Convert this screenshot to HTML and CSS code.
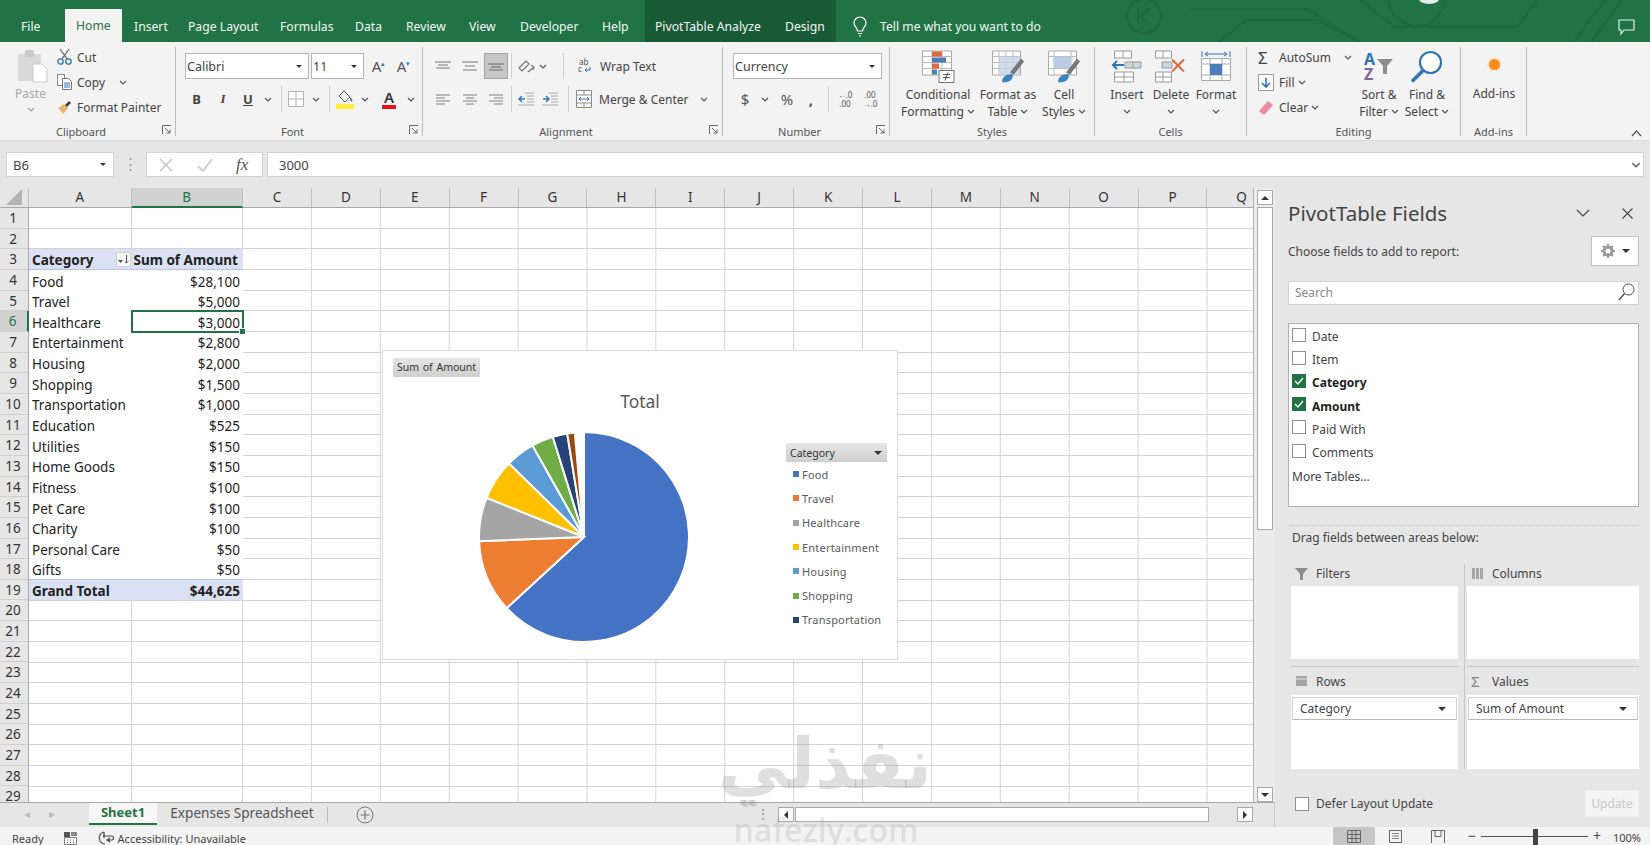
FILE: index.html
```html
<!DOCTYPE html>
<html lang="en">
<head>
    <meta charset="UTF-8">
    <title>Excel - PivotTable</title>
    <link rel="stylesheet" href="styles.css">
</head>
<body>
    <svg class="defs" width="0" height="0">
        <symbol id="chev" viewBox="0 0 8 5"><path d="M1 1l3 3 3-3" fill="none" stroke="#555" stroke-width="1.2"/></symbol>
        <symbol id="launch" viewBox="0 0 10 10"><path d="M.5 9V.5H9M3 3l5 5M8 4.5V8H4.5" fill="none" stroke="#666"/></symbol>
        <symbol id="caret" viewBox="0 0 8 4"><path d="M0 0h8L4 4z" fill="#333"/></symbol>
    </svg>

    <!-- Title bar with tabs -->
    <header class="titlebar">
        <svg class="circuit" width="560" height="42" viewBox="0 0 560 42">
            <g fill="none" stroke="#1d6a40" stroke-width="2">
                <circle cx="54" cy="16" r="17"/>
                <path d="M48 7v17M60 8l-10 8 10 9"/>
                <path d="M101 9h116l53 33M129 42l28-22h70l43 22M270 0l35 27h122l21-27M484 42l31-42M501 42l31-42"/>
                <circle cx="327" cy="-2" r="28"/>
            </g>
            <ellipse cx="339" cy="-1" rx="10" ry="5" fill="#e8ece9"/>
        </svg>
        <nav class="tabs">
            <a class="tab tab-file">File</a>
            <a class="tab tab-home">Home</a>
            <a class="tab tab-insert">Insert</a>
            <a class="tab tab-layout">Page Layout</a>
            <a class="tab tab-formulas">Formulas</a>
            <a class="tab tab-data">Data</a>
            <a class="tab tab-review">Review</a>
            <a class="tab tab-view">View</a>
            <a class="tab tab-dev">Developer</a>
            <a class="tab tab-help">Help</a>
            <div class="context-tabs">
                <a class="tab tab-pivot">PivotTable Analyze</a>
                <a class="tab">Design</a>
            </div>
            <svg class="bulb" width="14" height="20" viewBox="0 0 14 20"><path d="M4.5 14C4 10 1 9.500 1 6a6 6 0 0 1 12 0c0 3.500-3 4-3.500 8zM5 16.500h4M6 19h2" fill="none" stroke="#fff" stroke-width="1.200"/></svg>
            <span class="tell-me">Tell me what you want to do</span>
        </nav>
        <svg class="comment-icon" width="17" height="16" viewBox="0 0 17 16"><path d="M1 1h15v10H6l-3 4v-4H1z" fill="none" stroke="#e6f2ea" stroke-width="1.200"/></svg>
    </header>

    <!-- Ribbon -->
    <div class="ribbon">
        <section class="group g-clipboard">
            <div class="group-body">
                <div class="paste">
                    <svg width="30" height="32" viewBox="0 0 30 32">
                        <rect x="0" y="4" width="23" height="27" rx="1" fill="#dadada"/>
                        <rect x="7" y="0" width="9" height="7" rx="2" fill="#c9c9c9"/>
                        <path d="M15 14h9l5 5v13H15z" fill="#fff" stroke="#c8c8c8"/>
                    </svg>
                    <span class="paste-label">Paste</span>
                    <svg class="chev chev-pale"><use href="#chev"/></svg>
                </div>
                <div class="stack stack-clip">
                    <div class="stack-row">
                        <svg class="small-icon" width="15" height="16" viewBox="0 0 15 16"><path d="M3 0l7 10M12 0L5 10" stroke="#666" stroke-width="1.300" fill="none"/><circle cx="3.500" cy="12.500" r="2.700" fill="none" stroke="#2f75b5" stroke-width="1.300"/><circle cx="11.500" cy="12.500" r="2.700" fill="none" stroke="#2f75b5" stroke-width="1.300"/></svg>
                        <span>Cut</span>
                    </div>
                    <div class="stack-row">
                        <svg class="small-icon" width="15" height="16" viewBox="0 0 15 16"><path d="M.5.500h7v11h-7z" fill="#fff" stroke="#888"/><path d="M5.500 4.500h6l3 3v8h-9z" fill="#fff" stroke="#777"/><path d="M7 9h6M7 11h6M7 13h6" stroke="#2f75b5"/></svg>
                        <span>Copy</span>
                        <svg class="chev chev-copy"><use href="#chev"/></svg>
                    </div>
                    <div class="stack-row">
                        <svg class="small-icon" width="15" height="14" viewBox="0 0 15 14"><path d="M1 8l6-4 4 4-5 6c-1-2-3-4-5-6z" fill="#e9b66a"/><path d="M8 5l4-4 2 2-4 4z" fill="#444"/></svg>
                        <span>Format Painter</span>
                    </div>
                </div>
            </div>
            <div class="group-label"><span>Clipboard</span><svg class="launcher"><use href="#launch"/></svg></div>
        </section>

        <section class="group g-font">
            <div class="group-body col-body">
                <div class="row row-top">
                    <div class="combo combo-font"><span>Calibri</span><svg class="caret caret-sm"><use href="#caret"/></svg></div>
                    <div class="combo combo-size"><span>11</span><svg class="caret caret-sm"><use href="#caret"/></svg></div>
                    <span class="grow-a">A<sup>▴</sup></span>
                    <span class="grow-a">A<sup>▾</sup></span>
                </div>
                <div class="row row-bottom">
                    <span class="tb w23 fmt-b">B</span>
                    <span class="tb w30 fmt-i">I</span>
                    <span class="tb w20 fmt-u">U</span>
                    <span class="tb w20"><svg class="chev"><use href="#chev"/></svg></span>
                    <span class="sep sep-a"></span>
                    <span class="tb w28"><svg width="16" height="16" viewBox="0 0 16 16"><path d="M.5.500h15v15H.5zM8 .5v15M.5 8h15" fill="#fff" stroke="#b5b5b5"/></svg></span>
                    <span class="tb w12"><svg class="chev"><use href="#chev"/></svg></span>
                    <span class="sep sep-b"></span>
                    <span class="tb w30"><svg width="18" height="20" viewBox="0 0 18 20"><path d="M3 7l5-5 6 6-5 5z" fill="#fff" stroke="#555"/><path d="M14 8c2 2 3 3 2 5-2-1-2-3-2-5z" fill="#2f75b5"/><rect y="15" width="18" height="5" fill="#ffeb3b"/></svg></span>
                    <span class="tb w10"><svg class="chev"><use href="#chev"/></svg></span>
                    <span class="tb w34 color-a"><span class="color-letter">A</span></span>
                    <span class="tb w10"><svg class="chev"><use href="#chev"/></svg></span>
                </div>
            </div>
            <div class="group-label"><span>Font</span><svg class="launcher"><use href="#launch"/></svg></div>
        </section>

        <section class="group g-align">
            <div class="group-body col-body">
                <div class="row row-top">
                    <span class="tb w26"><svg width="16" height="10" viewBox="0 0 16 10"><path d="M0 1h16M3 4h10M1 7h14" stroke="#a0a0a0" stroke-width="1.500"/></svg></span>
                    <span class="tb w28"><svg width="16" height="12" viewBox="0 0 16 12"><path d="M0 2h16M3 6h10M1 10h14" stroke="#a0a0a0" stroke-width="1.500"/></svg></span>
                    <span class="tb w24 active-btn"><svg width="16" height="12" viewBox="0 0 16 12"><path d="M0 4h16M3 7h10M1 10h14" stroke="#8a8a8a" stroke-width="1.500"/></svg></span>
                    <span class="sep sep-c"></span>
                    <span class="tb w24"><svg width="17" height="15" viewBox="0 0 17 15"><path d="M1 9l7-7 3 3-7 7zM10 13l6-5M13 6l3 2-1 3" fill="none" stroke="#777" stroke-width="1.200"/></svg></span>
                    <span class="tb w10"><svg class="chev"><use href="#chev"/></svg></span>
                    <span class="sep sep-d"></span>
                    <span class="tb w30 wrap-icon"><svg width="14" height="14" viewBox="0 0 14 14"><text x="1" y="6" class="svg-ab">ab</text><text x="0" y="13" class="svg-ab">c</text><path d="M7 11h5V8M9 9l-2 2 2 2" fill="none" stroke="#2f75b5"/></svg></span>
                    <span class="ribbon-text">Wrap Text</span>
                </div>
                <div class="row row-bottom">
                    <span class="tb w26"><svg width="14" height="10" viewBox="0 0 14 10"><path d="M0 1h14M0 4h9M0 7h14M0 10h9" stroke="#a8a8a8" stroke-width="1.300"/></svg></span>
                    <span class="tb w28"><svg width="14" height="10" viewBox="0 0 14 10"><path d="M0 1h14M3 4h8M0 7h14M3 10h8" stroke="#a8a8a8" stroke-width="1.300"/></svg></span>
                    <span class="tb w24"><svg width="14" height="10" viewBox="0 0 14 10"><path d="M0 1h14M5 4h9M0 7h14M5 10h9" stroke="#a8a8a8" stroke-width="1.300"/></svg></span>
                    <span class="sep sep-c"></span>
                    <span class="tb w24"><svg width="16" height="14" viewBox="0 0 16 14"><path d="M7 1h9M9 4h7M9 7h7M9 10h7M0 13h16" stroke="#a8a8a8"/><path d="M7 7H1M4 4L1 7l3 3" fill="none" stroke="#2f75b5" stroke-width="1.400"/></svg></span>
                    <span class="tb w24"><svg width="16" height="14" viewBox="0 0 16 14"><path d="M7 1h9M9 4h7M9 7h7M9 10h7M0 13h16" stroke="#a8a8a8"/><path d="M1 7h6M4 4l3 3-3 3" fill="none" stroke="#2f75b5" stroke-width="1.400"/></svg></span>
                    <span class="sep sep-e"></span>
                    <span class="tb w30"><svg width="16" height="18" viewBox="0 0 16 18"><path d="M.5.500h15v17H.5zM.5 5h15M.5 13h15M8 .5V5M8 13v4.500" fill="#fff" stroke="#888"/><path d="M3 9h10M5 7L3 9l2 2M11 7l2 2-2 2" fill="none" stroke="#2f75b5"/></svg></span>
                    <span class="ribbon-text merge-text">Merge &amp; Center</span>
                    <svg class="chev"><use href="#chev"/></svg>
                </div>
            </div>
            <div class="group-label"><span>Alignment</span><svg class="launcher"><use href="#launch"/></svg></div>
        </section>

        <section class="group g-number">
            <div class="group-body col-body">
                <div class="row row-top">
                    <div class="combo combo-number"><span>Currency</span><svg class="caret caret-sm"><use href="#caret"/></svg></div>
                </div>
                <div class="row row-bottom">
                    <span class="tb w20 num-sym">$</span>
                    <span class="tb w20"><svg class="chev"><use href="#chev"/></svg></span>
                    <span class="tb w24 num-sym">%</span>
                    <span class="tb w24 num-sym num-comma">,</span>
                    <span class="sep sep-f"></span>
                    <span class="tb w26 dec-icon"><span class="dec-arrow">←</span>.0<br>.00</span>
                    <span class="tb w24 dec-icon">.00<br><span class="dec-arrow">→</span>.0</span>
                </div>
            </div>
            <div class="group-label"><span>Number</span><svg class="launcher"><use href="#launch"/></svg></div>
        </section>

        <section class="group g-styles">
            <div class="group-body big-row">
                <div class="big-btn w76">
                    <svg class="big-icon" width="32" height="32" viewBox="0 0 32 32">
                        <path d="M.5.500h29v24H.5z" fill="#fff" stroke="#aaa"/><path d="M10 .5v24M20 .5v24M.5 6h29M.5 12h29M.5 18h29" stroke="#bbb"/>
                        <rect x="10" y="1" width="10" height="5" fill="#e2673a"/><rect x="10" y="7" width="14" height="5" fill="#4a7ebb"/><rect x="10" y="13" width="7" height="5" fill="#e2673a"/><rect x="10" y="19" width="5" height="5" fill="#4a7ebb"/>
                        <rect x="17" y="20" width="15" height="12" fill="#fff" stroke="#777"/><path d="M21 24h7M21 27h7M26 22l-3 8" stroke="#555"/>
                    </svg>
                    <span>Conditional</span>
                    <span>Formatting <svg class="chev inline-chev"><use href="#chev"/></svg></span>
                </div>
                <div class="big-btn w64">
                    <svg class="big-icon" width="32" height="32" viewBox="0 0 32 32">
                        <path d="M.5.500h28v24H.5z" fill="#fff" stroke="#aaa"/><path d="M7 .5v24M14 .5v24M21 .5v24M.5 6h28M.5 12h28M.5 18h28" stroke="#bbb"/>
                        <rect x="7" y="6" width="21" height="18" fill="#c4d3e6" opacity=".8"/>
                        <path d="M18 22L29 8l3 3-10 13z" fill="#777"/><path d="M10 32c0-6 5-9 11-8 0 5-3 8-11 8z" fill="#3b82c4"/>
                    </svg>
                    <span>Format as</span>
                    <span>Table <svg class="chev inline-chev"><use href="#chev"/></svg></span>
                </div>
                <div class="big-btn w46">
                    <svg class="big-icon" width="32" height="32" viewBox="0 0 32 32">
                        <path d="M.5.500h28v24H.5z" fill="#fff" stroke="#aaa"/><path d="M.5 6h28M.5 18h28M6 .5v24M23 .5v24" stroke="#bbb"/>
                        <rect x="6" y="6" width="17" height="12" fill="#b8cbe3"/>
                        <path d="M18 22L29 8l3 3-10 13z" fill="#777"/><path d="M10 32c0-6 5-9 11-8 0 5-3 8-11 8z" fill="#3b82c4"/>
                    </svg>
                    <span>Cell</span>
                    <span>Styles <svg class="chev inline-chev"><use href="#chev"/></svg></span>
                </div>
            </div>
            <div class="group-label"><span>Styles</span></div>
        </section>

        <section class="group g-cells">
            <div class="group-body big-row">
                <div class="big-btn w44">
                    <svg class="big-icon" width="30" height="32" viewBox="0 0 30 32">
                        <path d="M2.500.5h17v7h-17zM11 .5v7M2.500 21.500h19v10h-19zM2.500 26.500h19M12 21.500v10" fill="#fff" stroke="#999"/>
                        <path d="M13 11.500h16v6H13zM21 11.500v6" fill="#ccd6e0" stroke="#999"/>
                        <path d="M12 14.500H1M5 10.500l-4 4 4 4" fill="none" stroke="#2f75b5" stroke-width="2"/>
                    </svg>
                    <span>Insert</span>
                    <svg class="chev"><use href="#chev"/></svg>
                </div>
                <div class="big-btn w44">
                    <svg class="big-icon" width="32" height="32" viewBox="0 0 32 32">
                        <path d="M.5.500h16v7H.5zM8 .5v7M.5 21.500h16v10H.5zM.5 26.500h16M8 21.500v10" fill="#fff" stroke="#999"/>
                        <path d="M7 11.500h10v6H7z" fill="#ccd6e0" stroke="#999"/>
                        <path d="M17 9l12 12M29 9L17 21" stroke="#e2673a" stroke-width="2"/>
                    </svg>
                    <span>Delete</span>
                    <svg class="chev"><use href="#chev"/></svg>
                </div>
                <div class="big-btn w46">
                    <svg class="big-icon" width="30" height="33" viewBox="0 0 30 33">
                        <path d="M1 1v6M29 1v6M4 4h22M4 4l3-2M4 4l3 2M26 4l-3-2M26 4l-3 2" stroke="#2f75b5" fill="none"/>
                        <path d="M.5 8.500h29v22H.5zM9 8.500v22M21 8.500v22M.5 14h29M.5 25h29" fill="#fff" stroke="#aaa"/>
                        <rect x="9" y="14" width="12" height="11" fill="#4a7ebb"/>
                    </svg>
                    <span>Format</span>
                    <svg class="chev"><use href="#chev"/></svg>
                </div>
            </div>
            <div class="group-label"><span>Cells</span></div>
        </section>

        <section class="group g-editing">
            <div class="group-body editing-body">
                <div class="stack stack-edit">
                    <div class="stack-row"><span class="sigma">Σ</span><span class="autosum">AutoSum</span><svg class="chev"><use href="#chev"/></svg></div>
                    <div class="stack-row">
                        <svg class="edit-icon" width="16" height="17" viewBox="0 0 16 17"><path d="M.5.500h15v16H.5z" fill="#fff" stroke="#999"/><path d="M8 4v9M4 9l4 4 4-4" fill="none" stroke="#2f75b5" stroke-width="1.600"/></svg>
                        <span>Fill</span><svg class="chev"><use href="#chev"/></svg>
                    </div>
                    <div class="stack-row">
                        <svg class="edit-icon" width="16" height="15" viewBox="0 0 16 15"><path d="M10 1l5 4-8 9-2 .5L1 11z" fill="#ed8ba3"/></svg>
                        <span>Clear</span><svg class="chev"><use href="#chev"/></svg>
                    </div>
                </div>
                <div class="big-btn w48 sort-btn">
                    <svg class="big-icon" width="32" height="31" viewBox="0 0 32 31"><text x="1" y="14" class="svg-az-a">A</text><text x="1" y="29" class="svg-az-z">Z</text><path d="M14 8h16l-6 7v8h-4v-8z" fill="#8c8c8c"/></svg>
                    <span>Sort &amp;</span>
                    <span>Filter <svg class="chev inline-chev"><use href="#chev"/></svg></span>
                </div>
                <div class="big-btn w48">
                    <svg class="big-icon" width="32" height="32" viewBox="0 0 32 32"><circle cx="19.500" cy="12" r="10.500" fill="#fff" stroke="#2f75b5" stroke-width="2.200"/><path d="M12 20L2 30" stroke="#2f75b5" stroke-width="3.500" stroke-linecap="round"/></svg>
                    <span>Find &amp;</span>
                    <span>Select <svg class="chev inline-chev"><use href="#chev"/></svg></span>
                </div>
            </div>
            <div class="group-label"><span>Editing</span></div>
        </section>

        <section class="group g-addins">
            <div class="group-body big-row">
                <div class="big-btn w66">
                    <div class="addin-dot"></div>
                    <span>Add-ins</span>
                </div>
            </div>
            <div class="group-label"><span>Add-ins</span></div>
        </section>

        <svg class="collapse" width="11" height="7" viewBox="0 0 11 7"><path d="M1 6l4.500-5L10 6" fill="none" stroke="#555" stroke-width="1.200"/></svg>
    </div>

    <!-- Formula bar -->
    <div class="formula-bar">
        <div class="name-box"><span>B6</span><svg class="caret caret-sm"><use href="#caret"/></svg></div>
        <div class="fx-dots">⋮</div>
        <div class="fx-buttons">
            <svg width="14" height="14" viewBox="0 0 14 14"><path d="M1 1l12 12M13 1L1 13" stroke="#c6c6c6" stroke-width="1.500"/></svg>
            <svg width="16" height="14" viewBox="0 0 16 14"><path d="M1 8l5 5L15 1" fill="none" stroke="#c6c6c6" stroke-width="1.500"/></svg>
            <span class="fx">fx</span>
        </div>
        <div class="formula-input"><span>3000</span><svg class="chev formula-chev"><use href="#chev"/></svg></div>
    </div>

    <div class="workspace">
        <div class="workbook">
            <div class="sheet-wrap">
                <div class="grid-area">
                    <div class="col-heads">
                        <div class="corner"><svg width="16" height="16" viewBox="0 0 16 16"><path d="M16 0v16H0z" fill="#b4b4b4"/></svg></div>
                        <div class="col-head col-a">A</div>
                        <div class="col-head col-b col-active">B</div>
                        <div class="col-head">C</div>
                        <div class="col-head">D</div>
                        <div class="col-head">E</div>
                        <div class="col-head">F</div>
                        <div class="col-head">G</div>
                        <div class="col-head">H</div>
                        <div class="col-head">I</div>
                        <div class="col-head">J</div>
                        <div class="col-head">K</div>
                        <div class="col-head">L</div>
                        <div class="col-head">M</div>
                        <div class="col-head">N</div>
                        <div class="col-head">O</div>
                        <div class="col-head">P</div>
                        <div class="col-head">Q</div>
                    </div>
                    <div class="sheet-body">
                        <div class="row-heads">
                            <div>1</div><div>2</div><div>3</div><div>4</div><div>5</div>
                            <div class="row-active">6</div><div>7</div><div>8</div><div>9</div><div>10</div>
                            <div>11</div><div>12</div><div>13</div><div>14</div><div>15</div>
                            <div>16</div><div>17</div><div>18</div><div>19</div><div>20</div>
                            <div>21</div><div>22</div><div>23</div><div>24</div><div>25</div>
                            <div>26</div><div>27</div><div>28</div><div>29</div>
                        </div>
                        <div class="cells">
                            <div class="cols-ab">
                                <table class="pivot">
                                    <tr class="pivot-head"><td>Category<span class="filter-btn"><svg width="11" height="9" viewBox="0 0 11 9"><path d="M0 5h5L2.500 8z" fill="#555"/><path d="M8.500 0v8M7 6.500l1.500 1.500L10 6.500" fill="none" stroke="#555"/></svg></span></td><td class="head-b">Sum of Amount</td></tr>
                                    <tr><td>Food</td><td class="amt">$28,100</td></tr>
                                    <tr><td>Travel</td><td class="amt">$5,000</td></tr>
                                    <tr><td>Healthcare</td><td class="amt cell-selected">$3,000</td></tr>
                                    <tr><td>Entertainment</td><td class="amt">$2,800</td></tr>
                                    <tr><td>Housing</td><td class="amt">$2,000</td></tr>
                                    <tr><td>Shopping</td><td class="amt">$1,500</td></tr>
                                    <tr><td>Transportation</td><td class="amt">$1,000</td></tr>
                                    <tr><td>Education</td><td class="amt">$525</td></tr>
                                    <tr><td>Utilities</td><td class="amt">$150</td></tr>
                                    <tr><td>Home Goods</td><td class="amt">$150</td></tr>
                                    <tr><td>Fitness</td><td class="amt">$100</td></tr>
                                    <tr><td>Pet Care</td><td class="amt">$100</td></tr>
                                    <tr><td>Charity</td><td class="amt">$100</td></tr>
                                    <tr><td>Personal Care</td><td class="amt">$50</td></tr>
                                    <tr><td>Gifts</td><td class="amt">$50</td></tr>
                                    <tr class="pivot-total"><td>Grand Total</td><td class="amt">$44,625</td></tr>
                                </table>
                            </div>
                            <div class="cols-rest"></div>

                            <!-- Chart floats over the cells -->
                            <div class="chart">
                                <div class="chart-field">Sum of Amount</div>
                                <div class="chart-title">Total</div>
                                <svg class="pie" width="214" height="214" viewBox="-107 -107 214 214">
                                    <g stroke="#fff" stroke-width="2">
                                        <path d="M0 0L0-105A105 105 0 1 1-77.300 71.100Z" fill="#4472c4"/>
                                        <path d="M0 0L-77.300 71.100A105 105 0 0 1-104.900 4.200Z" fill="#ed7d31"/>
                                        <path d="M0 0L-104.900 4.200A105 105 0 0 1-97.400-39.200Z" fill="#a5a5a5"/>
                                        <path d="M0 0L-97.400-39.200A105 105 0 0 1-74.900-73.600Z" fill="#ffc000"/>
                                        <path d="M0 0L-74.900-73.600A105 105 0 0 1-51.500-91.500Z" fill="#5b9bd5"/>
                                        <path d="M0 0L-51.500-91.500A105 105 0 0 1-31.200-100.300Z" fill="#70ad47"/>
                                        <path d="M0 0L-31.200-100.300A105 105 0 0 1-16.800-103.600Z" fill="#264478"/>
                                        <path d="M0 0L-16.800-103.600A105 105 0 0 1-9.200-104.600Z" fill="#9e480e"/>
                                    </g>
                                </svg>
                                <div class="legend">
                                    <div class="legend-field"><span>Category</span><svg class="caret"><use href="#caret"/></svg></div>
                                    <div class="legend-item"><i class="swatch s-food"></i>Food</div>
                                    <div class="legend-item"><i class="swatch s-travel"></i>Travel</div>
                                    <div class="legend-item"><i class="swatch s-health"></i>Healthcare</div>
                                    <div class="legend-item"><i class="swatch s-ent"></i>Entertainment</div>
                                    <div class="legend-item"><i class="swatch s-housing"></i>Housing</div>
                                    <div class="legend-item"><i class="swatch s-shop"></i>Shopping</div>
                                    <div class="legend-item"><i class="swatch s-trans"></i>Transportation</div>
                                </div>
                            </div>
                        </div>
                    </div>
                </div>
                <div class="vscroll">
                    <div class="sb-btn"><svg class="caret caret-up"><use href="#caret"/></svg></div>
                    <div class="v-thumb"></div>
                    <div class="v-track"></div>
                    <div class="sb-btn"><svg class="caret"><use href="#caret"/></svg></div>
                </div>
            </div>
            <div class="tabbar">
                <span class="tab-nav">◂</span>
                <span class="tab-nav">▸</span>
                <div class="sheet-tab">Sheet1</div>
                <div class="sheet-tab2">Expenses Spreadsheet</div>
                <span class="tab-sep"></span>
                <span class="add-sheet"><svg width="18" height="18" viewBox="0 0 18 18"><circle cx="9" cy="9" r="8" fill="none" stroke="#777"/><path d="M9 4.500v9M4.500 9h9" stroke="#777" stroke-width="1.200"/></svg></span>
                <span class="hdots">⋮</span>
                <div class="hscroll">
                    <div class="sb-btn sb-h"><svg class="caret caret-left"><use href="#caret"/></svg></div>
                    <div class="h-thumb"></div>
                    <div class="h-track"></div>
                    <div class="sb-btn sb-h"><svg class="caret caret-right"><use href="#caret"/></svg></div>
                </div>
            </div>
        </div>

        <!-- PivotTable Fields pane -->
        <aside class="pane">
            <div class="pane-head">
                <h2>PivotTable Fields</h2>
                <svg class="pane-chev" width="14" height="8" viewBox="0 0 14 8"><path d="M1 1l6 6 6-6" fill="none" stroke="#444" stroke-width="1.100"/></svg>
                <svg class="pane-close" width="11" height="11" viewBox="0 0 11 11"><path d="M.5.500l10 10M10.500.5l-10 10" stroke="#444" stroke-width="1.100"/></svg>
            </div>
            <div class="pane-choose">
                <span>Choose fields to add to report:</span>
                <div class="gear-btn">
                    <svg width="14" height="14" viewBox="0 0 14 14"><circle cx="7" cy="7" r="4" fill="none" stroke="#999" stroke-width="3"/><path d="M7 0v3M7 11v3M0 7h3M11 7h3M2 2l2 2M10 10l2 2M12 2l-2 2M4 10l-2 2" stroke="#999" stroke-width="2"/></svg>
                    <svg class="caret"><use href="#caret"/></svg>
                </div>
            </div>
            <div class="pane-search">
                <span>Search</span>
                <svg width="17" height="18" viewBox="0 0 17 18"><circle cx="10.500" cy="6.500" r="5.500" fill="none" stroke="#444"/><path d="M6.500 10.500L1 17" stroke="#444" stroke-width="1.200"/></svg>
            </div>
            <div class="field-list">
                <label class="field"><i class="check"></i>Date</label>
                <label class="field"><i class="check"></i>Item</label>
                <label class="field field-on"><i class="check check-on"><svg width="10" height="8" viewBox="0 0 10 8"><path d="M1 4l3 3 5-6" fill="none" stroke="#fff" stroke-width="1.300"/></svg></i>Category</label>
                <label class="field field-on"><i class="check check-on"><svg width="10" height="8" viewBox="0 0 10 8"><path d="M1 4l3 3 5-6" fill="none" stroke="#fff" stroke-width="1.300"/></svg></i>Amount</label>
                <label class="field"><i class="check"></i>Paid With</label>
                <label class="field"><i class="check"></i>Comments</label>
                <div class="more-tables">More Tables...</div>
            </div>
            <div class="pane-dots"></div>
            <div class="drag-hint">Drag fields between areas below:</div>
            <div class="areas">
                <div class="area">
                    <div class="area-head">
                        <svg width="13" height="12" viewBox="0 0 13 12"><path d="M0 0h13L8 6v6H5V6z" fill="#8c8c8c"/></svg>
                        <span>Filters</span>
                    </div>
                    <div class="area-box area-top"></div>
                </div>
                <div class="area">
                    <div class="area-head">
                        <svg width="13" height="12" viewBox="0 0 13 12"><path d="M1 0h3v11H1zM5 0h3v11H5zM9 0h3v11H9z" fill="#a5a5a5"/></svg>
                        <span>Columns</span>
                    </div>
                    <div class="area-box area-top"></div>
                </div>
                <div class="area area-lower">
                    <div class="area-head">
                        <svg width="13" height="12" viewBox="0 0 13 12"><path d="M1 1h11v2.500H1zM1 4.500h11V11H1z" fill="#a5a5a5"/></svg>
                        <span>Rows</span>
                    </div>
                    <div class="area-box area-bottom">
                        <div class="area-item"><span>Category</span><svg class="caret"><use href="#caret"/></svg></div>
                    </div>
                </div>
                <div class="area area-lower">
                    <div class="area-head">
                        <span class="sum-icon">Σ</span>
                        <span>Values</span>
                    </div>
                    <div class="area-box area-bottom">
                        <div class="area-item"><span>Sum of Amount</span><svg class="caret"><use href="#caret"/></svg></div>
                    </div>
                </div>
            </div>
            <div class="pane-foot">
                <label class="defer"><i class="check check-defer"></i>Defer Layout Update</label>
                <div class="update-btn">Update</div>
            </div>
        </aside>
    </div>

    <!-- Status bar -->
    <footer class="statusbar">
        <span class="ready">Ready</span>
        <svg class="calc-icon" width="13" height="13" viewBox="0 0 13 13"><rect width="6" height="5" fill="#555"/><path d="M.5 5.500h12v7H.5z" fill="#fff" stroke="#777"/><path d="M3 8h1M6 8h1M9 8h1M3 10.500h1M6 10.500h1M9 10.500h1" stroke="#555"/><rect x="7" width="6" height="4" fill="#888"/></svg>
        <svg class="a11y-icon" width="17" height="14" viewBox="0 0 17 14"><path d="M6 1C2 2 0 6 2 10c1 2 3 3 5 3" fill="none" stroke="#555" stroke-width="1.200"/><path d="M5 5h9c2 0 2 4 0 4h-4M12 7l-3 2 3 2M6 1v6" fill="none" stroke="#444" stroke-width="1.200"/></svg>
        <span class="a11y-text">Accessibility: Unavailable</span>
        <div class="views">
            <span class="view view-on"><svg width="14" height="13" viewBox="0 0 14 13"><path d="M.5.500h13v12H.5zM5 .5v12M9 .5v12M.5 4.500h13M.5 8.500h13" fill="none" stroke="#666"/></svg></span>
            <span class="view"><svg width="13" height="13" viewBox="0 0 13 13"><path d="M.5.500h12v12H.5z" fill="none" stroke="#666"/><path d="M3 3.500h7M3 6h7M3 8.500h7" stroke="#888"/></svg></span>
            <span class="view"><svg width="14" height="13" viewBox="0 0 14 13"><path d="M.5 13V.5h13V13M4 .5v6h6V.5" fill="none" stroke="#666"/></svg></span>
        </div>
        <div class="zoom-ctl">
            <span class="zoom-sign">−</span>
            <div class="slider"><i></i></div>
            <span class="zoom-sign">+</span>
            <span class="zoom-pct">100%</span>
        </div>
    </footer>

    <!-- Site watermark -->
    <div class="watermark-ar" dir="rtl" lang="ar">نفذلي</div>
    <div class="watermark-dots"></div>
    <div class="watermark-en">nafezly.com</div>
</body>
</html>
```

FILE: styles.css
```css
* {
    box-sizing: border-box;
}
html, body {
    margin: 0;
    padding: 0;
}
body {
    width: 1650px;
    height: 845px;
    overflow: hidden;
    position: relative;
    display: flex;
    flex-direction: column;
    font-family: "Noto Sans", "Open Sans", sans-serif;
    font-size: 12px;
    color: #444;
    background-color: #e6e6e6;
}
svg {
    overflow: visible;
}
.defs {
    position: absolute;
}
.chev {
    width: 8px;
    height: 5px;
    flex: none;
}
.chev-pale {
    opacity: .5;
}
.inline-chev {
    vertical-align: 2px;
}
.caret {
    width: 8px;
    height: 4px;
    flex: none;
}
.caret-sm {
    width: 6px;
    height: 3px;
}
.launcher {
    width: 10px;
    height: 10px;
    flex: none;
    margin-right: 3px;
}

/* Title bar */
.titlebar {
    height: 42px;
    flex: none;
    background-color: #217346;
    position: relative;
    overflow: hidden;
}
.circuit {
    position: absolute;
    left: 1090px;
    top: 0;
    overflow: hidden;
}
.comment-icon {
    position: absolute;
    left: 1618px;
    top: 19px;
}
.tabs {
    display: flex;
    height: 42px;
    color: #fff;
    font-size: 12.2px;
}
.tab {
    display: flex;
    align-items: center;
    height: 42px;
    padding-top: 10px;
    color: #f2f7f4;
    flex: none;
}
.tab-file { margin-left: 21px; width: 44px; }
.tab-home {
    width: 57px;
    margin-top: 9px;
    height: 33px;
    padding: 0 0 0 11px;
    background-color: #f3f3f3;
    color: #217346;
}
.tab-insert { margin-left: 12px; width: 54px; }
.tab-layout { width: 92px; }
.tab-formulas { width: 75px; }
.tab-data { width: 51px; }
.tab-review { width: 63px; }
.tab-view { width: 51px; }
.tab-dev { width: 82px; }
.tab-help { width: 43px; }
.context-tabs {
    display: flex;
    width: 191px;
    padding-left: 10px;
    background-color: #185a36;
}
.tab-pivot { width: 130px; }
.bulb {
    margin: 17px 0 0 17px;
    flex: none;
}
.tell-me {
    margin: 18px 0 0 13px;
    color: #f2f7f4;
}

/* Ribbon */
.ribbon {
    height: 98px;
    flex: none;
    display: flex;
    background-color: #f3f3f3;
    position: relative;
}
.group {
    height: 89px;
    margin-top: 5px;
    display: flex;
    flex-direction: column;
    border-right: 1px solid #bdbdbd;
    flex: none;
}
.g-clipboard { width: 176px; }
.g-font { width: 247px; }
.g-align { width: 300px; }
.g-number { width: 167px; }
.g-styles { width: 205px; }
.g-cells { width: 152px; }
.g-editing { width: 214px; }
.g-addins { width: 66px; }
.group-body {
    height: 78px;
    flex: none;
    display: flex;
}
.group-label {
    height: 11px;
    line-height: 14px;
    display: flex;
    font-size: 11px;
    color: #555;
}
.group-label span {
    flex: 1;
    text-align: center;
}
.collapse {
    position: absolute;
    left: 1631px;
    top: 88px;
}
.paste {
    width: 30px;
    margin: 3px 0 0 18px;
    display: flex;
    flex-direction: column;
    align-items: center;
    flex: none;
}
.paste-label {
    margin: 3px 5px 0 0;
    color: #a8a8a8;
}
.paste .chev {
    margin: 5px 5px 0 0;
}
.stack {
    display: flex;
    flex-direction: column;
    gap: 1px;
    margin-top: -2px;
}
.stack-clip {
    margin-left: 9px;
}
.stack-row {
    display: flex;
    align-items: center;
    height: 24px;
    gap: 5px;
}
.small-icon {
    flex: none;
}
.chev-copy {
    margin-left: 9px;
}
.col-body {
    flex-direction: column;
}
.row {
    display: flex;
    align-items: center;
}
.row-top {
    height: 26px;
    margin-top: 6px;
}
.row-bottom {
    height: 26px;
    margin-top: 7px;
}
.g-font .col-body {
    padding-left: 9px;
}
.combo {
    height: 26px;
    background-color: #fff;
    border: 1px solid #b5b5b5;
    display: flex;
    align-items: center;
    justify-content: space-between;
    padding: 0 6px 0 1px;
    font-size: 12.5px;
}
.combo-font { width: 124px; }
.combo-size { width: 53px; margin: 0 0 0 2px; }
.grow-a {
    width: 25px;
    text-align: center;
    font-size: 15px;
    color: #555;
}
.combo-size + .grow-a {
    margin-left: 2px;
}
.grow-a sup {
    font-size: 7px;
    color: #2f75b5;
    line-height: 0;
}
.tb {
    display: flex;
    align-items: center;
    justify-content: center;
    height: 26px;
    flex: none;
}
.w10 { width: 10px; }
.w12 { width: 12px; }
.w20 { width: 20px; }
.w23 { width: 23px; }
.w24 { width: 24px; }
.w26 { width: 26px; }
.w28 { width: 28px; }
.w30 { width: 30px; }
.w34 { width: 34px; }
.fmt-b {
    font-family: "Noto Sans", sans-serif;
    font-weight: 700;
    font-size: 13px;
}
.fmt-i {
    font-style: italic;
    font-weight: 700;
    font-size: 13px;
    font-family: "Liberation Serif", serif;
}
.fmt-u {
    font-weight: 700;
    font-size: 13px;
    text-decoration: underline;
}
.sep {
    width: 1px;
    height: 26px;
    background-color: #d0d0d0;
    flex: none;
}
.sep-a { margin: 0 0 0 3px; }
.sep-b { margin: 0 0 0 7px; }
.sep-c { margin: 0 2px 0 3px; }
.sep-d { margin: 0 0 0 15px; }
.sep-e { margin: 0 0 0 6px; }
.sep-f { margin: 0 3px 0 5px; }
.color-a {
    margin-left: 2px;
}
.color-letter {
    font-size: 15px;
    font-weight: 600;
    line-height: 16px;
    color: #333;
    border-bottom: 4px solid #e81123;
    padding: 0 2px;
}
.g-align .col-body {
    padding-left: 7px;
}
.active-btn {
    background-color: #c6c6c6;
    border: 1px solid #a5a5a5;
}
.wrap-icon {
    margin-left: 6px;
}
.ribbon-text {
    font-size: 12px;
}
.merge-text {
    margin-right: 11px;
}
.svg-ab {
    font-size: 8px;
    fill: #555;
}
.g-number .col-body {
    padding-left: 10px;
}
.g-number .row-bottom {
    padding-left: 2px;
}
.combo-number {
    width: 149px;
}
.num-sym {
    font-size: 15px;
    color: #555;
}
.num-comma {
    font-weight: 700;
}
.dec-icon {
    display: block;
    height: auto;
    font-size: 8px;
    line-height: 9px;
    text-align: center;
    color: #555;
}
.dec-arrow {
    color: #2f75b5;
}
.big-row {
    padding: 3px 0 0 10px;
}
.big-btn {
    display: flex;
    flex-direction: column;
    align-items: center;
    flex: none;
    line-height: 17px;
    text-align: center;
    white-space: nowrap;
}
.big-icon {
    height: 33px;
    margin-bottom: 3px;
    flex: none;
}
.big-btn > .chev {
    margin-top: 6px;
}
.w44 { width: 44px; }
.w46 { width: 46px; }
.w48 { width: 48px; }
.w64 { width: 64px; }
.w66 { width: 66px; }
.w76 { width: 76px; }
.g-styles .w46 { margin-left: 1px; }
.editing-body {
    padding: 3px 0 0 11px;
}
.stack-edit {
    width: 105px;
    flex: none;
}
.stack-edit .stack-row {
    gap: 3px;
}
.sigma {
    font-size: 17px;
    width: 18px;
    color: #444;
}
.autosum {
    width: 62px;
}
.edit-icon {
    margin-right: 2px;
    flex: none;
}
.sort-btn {
    margin-left: -8px;
}
.svg-az-a {
    font-size: 16px;
    font-weight: 700;
    fill: #2f75b5;
}
.svg-az-z {
    font-size: 16px;
    font-weight: 700;
    fill: #8064a2;
}
.editing-body .stack {
    margin-top: -5px;
}
.addin-dot {
    width: 11px;
    height: 11px;
    margin: 9px 0 15px;
    border-radius: 50%;
    background-color: #ff8c1a;
    box-shadow: 0 0 3px #ffc680;
}
.g-addins .big-row {
    padding-left: 0;
}

/* Formula bar */
.formula-bar {
    height: 48px;
    flex: none;
    display: flex;
    padding: 11px 6px 11px 6px;
    background-color: #e6e6e6;
    border-top: 1px solid #dcdcdc;
}
.name-box {
    width: 108px;
    background-color: #fff;
    border: 1px solid #d4d4d4;
    display: flex;
    align-items: center;
    justify-content: space-between;
    padding: 0 7px 0 6px;
    font-size: 13px;
}
.fx-dots {
    width: 32px;
    text-align: center;
    color: #999;
    line-height: 22px;
    font-size: 15px;
}
.fx-buttons {
    width: 117px;
    background-color: #fff;
    border: 1px solid #d4d4d4;
    display: flex;
    align-items: center;
    gap: 24px;
    padding-left: 12px;
}
.fx {
    font-family: "Liberation Serif", serif;
    font-style: italic;
    font-size: 17px;
    margin-left: -1px;
    color: #555;
}
.formula-input {
    flex: 1;
    margin-left: 4px;
    background-color: #fff;
    border: 1px solid #d4d4d4;
    display: flex;
    align-items: center;
    justify-content: space-between;
    padding: 0 2px 0 11px;
    font-size: 13px;
}
.formula-chev {
    width: 10px;
    height: 6px;
}

/* Sheet */
.workspace {
    height: 639px;
    flex: none;
    display: flex;
}
.workbook {
    width: 1275px;
    flex: none;
    display: flex;
    flex-direction: column;
    border-right: 1px solid #c8c8c8;
}
.sheet-wrap {
    height: 614px;
    flex: none;
    display: flex;
}
.grid-area {
    width: 1253px;
    flex: none;
    display: flex;
    flex-direction: column;
    overflow: hidden;
}
.col-heads {
    height: 20px;
    flex: none;
    display: flex;
    background-color: #e6e6e6;
    border-bottom: 1px solid #a8a8a8;
}
.corner {
    width: 29px;
    flex: none;
    display: flex;
    align-items: flex-end;
    justify-content: center;
    padding: 0 0 2px 0;
    border-right: 1px solid #c0c0c0;
}
.col-head {
    width: 68.9px;
    flex: none;
    text-align: center;
    line-height: 19px;
    font-size: 13.5px;
    border-right: 1px solid #c0c0c0;
    color: #333;
}
.col-a { width: 102.5px; }
.col-b { width: 111.5px; }
.col-active {
    background-color: #d2d2d2;
    color: #217346;
    border-bottom: 2px solid #217346;
    height: 20px;
}
.sheet-body {
    flex: 1;
    display: flex;
    min-height: 0;
    position: relative;
}
.row-heads {
    width: 29px;
    flex: none;
    border-right: 1px solid #a8a8a8;
    background-color: #e6e6e6;
}
.row-heads div {
    height: 20.67px;
    line-height: 21px;
    padding-right: 2px;
    text-align: center;
    font-size: 13.5px;
    color: #333;
    border-bottom: 1px solid #d0d0d0;
}
.row-heads .row-active {
    background-color: #d2d2d2;
    color: #217346;
    margin-right: -1px;
    border-right: 2px solid #217346;
}
.cells {
    flex: 1;
    display: flex;
    position: relative;
    background-color: #fff;
}
.cols-ab {
    width: 214px;
    flex: none;
    padding-top: 41.34px;
    background:
        linear-gradient(#d4d4d4, #d4d4d4) 102px 0 / 1px 100% no-repeat,
        linear-gradient(#d4d4d4, #d4d4d4) 213px 0 / 1px 100% no-repeat,
        repeating-linear-gradient(to bottom, transparent 0, transparent 19.67px, #d4d4d4 19.67px, #d4d4d4 20.67px);
}
.cols-rest {
    flex: 1;
    background:
        linear-gradient(to right, transparent 67.9px, #d4d4d4 67.9px) 0 0 / 68.9px 100%,
        repeating-linear-gradient(to bottom, transparent 0, transparent 19.67px, #d4d4d4 19.67px, #d4d4d4 20.67px);
}

/* Pivot table */
.pivot {
    width: 214px;
    border-collapse: collapse;
    table-layout: fixed;
    background-color: #fff;
    font-size: 13.5px;
    color: #222;
}
.pivot td {
    height: 20.67px;
    padding: 2px 3px 0;
    white-space: nowrap;
    position: relative;
}
.pivot td:first-child {
    width: 102.5px;
}
.pivot-head td {
    background-color: #d9e1f2;
    font-weight: 700;
    border-bottom: 1px solid #b4c6e7;
}
.pivot-head .head-b {
    text-align: left;
    padding-left: 2px;
}
.filter-btn {
    position: absolute;
    right: 1px;
    top: 3px;
    width: 15px;
    height: 15px;
    background-color: #f7f7f7;
    border: 1px solid #d0d0d0;
    display: flex;
    align-items: center;
    justify-content: center;
}
.amt {
    text-align: right;
}
.pivot-total td {
    background-color: #d9e1f2;
    font-weight: 700;
    border-top: 1px solid #b4c6e7;
}
.pivot .cell-selected {
    outline: 2px solid #217346;
    outline-offset: -1px;
}
.cell-selected::after {
    content: "";
    position: absolute;
    right: -3px;
    bottom: -3px;
    width: 5px;
    height: 5px;
    background-color: #217346;
    border: 1px solid #fff;
}

/* Chart */
.chart {
    position: absolute;
    left: 353px;
    top: 142px;
    width: 516px;
    height: 310px;
    background-color: #fff;
    border: 1px solid #dcdcdc;
}
.chart-field {
    position: absolute;
    left: 10px;
    top: 7px;
    width: 87px;
    height: 19px;
    background: linear-gradient(#e6e6e6, #cfcfcf);
    text-align: center;
    line-height: 18px;
    font-size: 10.5px;
    color: #333;
    word-spacing: 1px;
}
.chart-title {
    position: absolute;
    left: 0;
    right: 0;
    top: 37px;
    text-align: center;
    font-size: 17.5px;
    line-height: 26px;
    color: #595959;
}
.pie {
    position: absolute;
    left: 94px;
    top: 79px;
}
.legend {
    position: absolute;
    left: 403px;
    top: 92px;
    width: 101px;
}
.legend-field {
    height: 19px;
    background: linear-gradient(#e6e6e6, #cfcfcf);
    display: flex;
    align-items: center;
    justify-content: space-between;
    padding: 0 5px 0 4px;
    font-size: 10.5px;
    color: #333;
}
.legend-item {
    height: 24.3px;
    padding-left: 7px;
    display: flex;
    align-items: center;
    font-size: 11px;
    color: #595959;
    white-space: nowrap;
    letter-spacing: .2px;
}
.swatch {
    width: 6px;
    height: 6px;
    margin-right: 3px;
    flex: none;
}
.s-food { background-color: #4472c4; }
.s-travel { background-color: #ed7d31; }
.s-health { background-color: #a5a5a5; }
.s-ent { background-color: #ffc000; }
.s-housing { background-color: #5b9bd5; }
.s-shop { background-color: #70ad47; }
.s-trans { background-color: #264478; }

/* Scrollbars */
.vscroll {
    flex: 1;
    display: flex;
    flex-direction: column;
    align-items: center;
    padding: 2px 3px 0 3px;
    border-left: 1px solid #b0b0b0;
    background-color: #ececec;
}
.sb-btn {
    width: 16px;
    height: 15px;
    flex: none;
    display: flex;
    align-items: center;
    justify-content: center;
    background-color: #fff;
    border: 1px solid #a8a8a8;
}
.caret-up {
    transform: rotate(180deg);
}
.caret-left {
    transform: rotate(90deg);
}
.caret-right {
    transform: rotate(-90deg);
}
.v-thumb {
    width: 16px;
    height: 323px;
    margin-top: 2px;
    flex: none;
    background-color: #fff;
    border: 1px solid #a8a8a8;
}
.v-track {
    flex: 1;
}

/* Sheet tabs */
.tabbar {
    height: 25px;
    flex: none;
    display: flex;
    align-items: flex-start;
    background-color: #e6e6e6;
    border-top: 1px solid #a8a8a8;
    position: relative;
}
.tab-nav {
    width: 25px;
    text-align: center;
    color: #bdbdbd;
    line-height: 22px;
    font-size: 12px;
}
.tab-nav:first-child {
    margin-left: 14px;
}
.sheet-tab {
    width: 68px;
    height: 22px;
    margin-left: 25px;
    background-color: #f7f7f7;
    border-bottom: 2px solid #217346;
    color: #217346;
    font-weight: 700;
    font-size: 13px;
    line-height: 19px;
    text-align: center;
}
.sheet-tab2 {
    width: 170px;
    height: 22px;
    color: #555;
    font-size: 13.6px;
    line-height: 19px;
    text-align: center;
}
.tab-sep {
    width: 1px;
    height: 16px;
    margin-top: 4px;
    background-color: #bbb;
}
.add-sheet {
    margin: 3px 0 0 28px;
    height: 18px;
}
.hdots {
    margin-left: 383px;
    color: #888;
    line-height: 22px;
}
.hscroll {
    display: flex;
    margin: 4px 0 0 9px;
}
.sb-h {
    width: 16px;
}
.h-thumb {
    width: 414px;
    height: 15px;
    margin-left: 1px;
    background-color: #fff;
    border: 1px solid #a8a8a8;
}
.h-track {
    width: 28px;
}

/* PivotTable pane */
.pane {
    flex: 1;
    display: flex;
    flex-direction: column;
    padding: 0 12px 0 13px;
    background-color: #e6e6e6;
}
.pane-head {
    height: 48px;
    flex: none;
    display: flex;
    align-items: center;
    padding-top: 2px;
}
.pane-head h2 {
    margin: 0;
    flex: 1;
    font-size: 20.5px;
    font-weight: 400;
    color: #444;
}
.pane-close {
    margin: 0 6px 0 32px;
}
.pane-choose {
    height: 30px;
    flex: none;
    display: flex;
    align-items: center;
    justify-content: space-between;
    font-size: 12px;
    color: #444;
}
.gear-btn {
    width: 48px;
    height: 30px;
    background-color: #fff;
    border: 1px solid #c0c0c0;
    display: flex;
    align-items: center;
    justify-content: center;
    gap: 7px;
}
.pane-search {
    height: 24px;
    margin-top: 15px;
    flex: none;
    display: flex;
    align-items: center;
    justify-content: space-between;
    padding: 0 3px 2px 6px;
    background-color: #fff;
    border: 1px solid #d4d4d4;
    color: #888;
}
.field-list {
    height: 184px;
    margin-top: 18px;
    flex: none;
    background-color: #fff;
    border: 1px solid #b0b0b0;
    padding: 1px 0 0 3px;
}
.field {
    height: 23.2px;
    display: flex;
    align-items: center;
    color: #444;
}
.field-on {
    font-weight: 700;
    color: #222;
}
.check {
    width: 14px;
    height: 14px;
    margin: -4px 6px 0 0;
    flex: none;
    background-color: #fff;
    border: 1px solid #909090;
    display: flex;
    align-items: center;
    justify-content: center;
}
.check-on {
    background-color: #217346;
    border-color: #217346;
}
.more-tables {
    margin-top: 4px;
    color: #444;
}
.pane-dots {
    height: 1px;
    margin: 18px 0 0 2px;
    flex: none;
    border-top: 1px dotted #bbb;
}
.drag-hint {
    height: 24px;
    line-height: 24px;
    margin-left: 4px;
    flex: none;
}
.areas {
    margin: 14px 0 0 3px;
    display: grid;
    grid-template-columns: 167px 172px;
    column-gap: 9px;
    background: linear-gradient(#c8c8c8, #c8c8c8) 173px 0 / 1px 100% no-repeat;
}
.area-head {
    height: 22px;
    display: flex;
    align-items: center;
    gap: 8px;
    padding: 0 0 3px 4px;
}
.area-head svg,
.sum-icon {
    width: 13px;
    flex: none;
}
.sum-icon {
    color: #888;
    font-size: 15px;
}
.area-lower {
    margin-top: 7px;
    border-top: 1px solid #c8c8c8;
    margin-left: 0;
}
.area-lower .area-head {
    height: 28px;
    padding: 2px 0 2px 4px;
}
.area-box {
    background-color: #fff;
}
.area-top {
    height: 73px;
}
.area-bottom {
    height: 74px;
    padding: 2px 1px;
}
.area-item {
    height: 23px;
    display: flex;
    align-items: center;
    justify-content: space-between;
    padding: 0 10px 0 7px;
    background-color: #fff;
    border: 1px solid #d0d0d0;
    border-bottom-color: #b8b8b8;
    color: #444;
}
.pane-foot {
    display: flex;
    align-items: center;
    justify-content: space-between;
    padding: 21px 0 0 7px;
}
.defer {
    display: flex;
    align-items: center;
}
.check-defer {
    margin: 0 7px 0 0;
}
.update-btn {
    width: 54px;
    height: 27px;
    line-height: 25px;
    text-align: center;
    background-color: #f4f4f4;
    border: 1px solid #ededed;
    color: #c8c8c8;
}

/* Status bar */
.statusbar {
    height: 18px;
    flex: none;
    display: flex;
    align-items: flex-start;
    background-color: #f3f3f3;
    overflow: hidden;
    font-size: 11px;
}
.ready {
    margin: 4px 0 0 12px;
}
.calc-icon {
    margin: 5px 0 0 20px;
}
.a11y-icon {
    margin: 4px 0 0 21px;
}
.a11y-text {
    margin: 4px 0 0 3px;
}
.views {
    margin-left: auto;
    display: flex;
    align-items: flex-start;
}
.view {
    width: 42px;
    height: 18px;
    padding-top: 3px;
    display: flex;
    justify-content: center;
}
.view-on {
    background-color: #c6c6c6;
}
.zoom-ctl {
    display: flex;
    align-items: flex-start;
    margin: 0 9px 0 6px;
}
.zoom-sign {
    width: 14px;
    text-align: center;
    font-size: 14px;
    line-height: 18px;
}
.slider {
    width: 107px;
    height: 1px;
    margin: 9px 2px 0;
    background-color: #555;
    position: relative;
}
.slider i {
    position: absolute;
    left: 52px;
    top: -7px;
    width: 5px;
    height: 16px;
    background-color: #444;
}
.zoom-pct {
    margin: 3px 0 0 9px;
}

/* Watermark */
.watermark-ar {
    position: absolute;
    left: 715px;
    top: 734px;
    width: 220px;
    text-align: center;
    font-family: "DejaVu Sans", sans-serif;
    font-weight: 700;
    font-size: 70px;
    line-height: 60px;
    color: rgba(150, 150, 150, .3);
    pointer-events: none;
}
.watermark-dots {
    position: absolute;
    left: 742px;
    top: 800px;
    width: 7px;
    height: 7px;
    border-radius: 50%;
    background-color: rgba(150, 150, 150, .3);
    box-shadow: 8px 0 0 rgba(150, 150, 150, .3);
}
.watermark-en {
    position: absolute;
    left: 730px;
    top: 810px;
    width: 192px;
    text-align: center;
    font-family: "Open Sans", sans-serif;
    font-weight: 600;
    font-size: 32px;
    line-height: 40px;
    color: rgba(150, 150, 150, .22);
    pointer-events: none;
}
```
